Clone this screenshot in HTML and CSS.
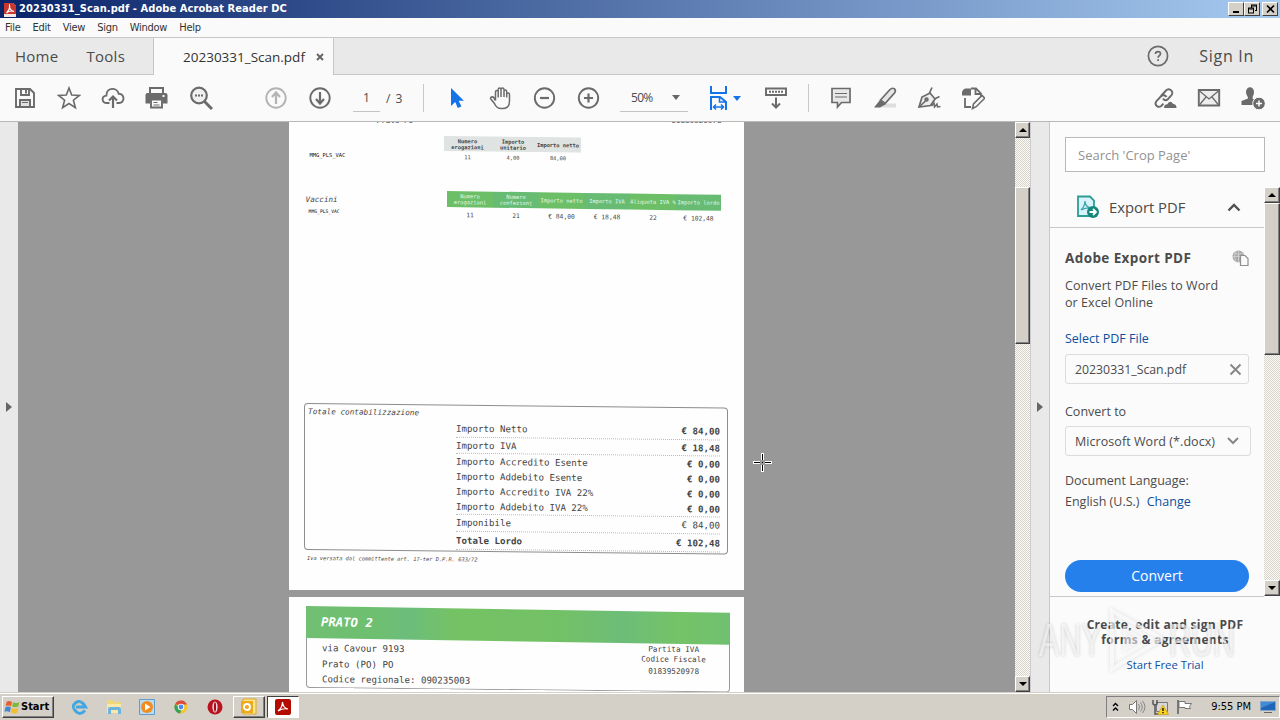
FILE: index.html
```html
<!DOCTYPE html>
<html lang="en">
<head>
  <meta charset="utf-8">
  <title>20230331_Scan.pdf - Adobe Acrobat Reader DC</title>
  <link rel="stylesheet" href="styles.css">
</head>
<body>
  <div class="titlebar">
    <svg class="app-icon" width="12" height="15" viewBox="0 0 12 15"><path d="M0 1h9l3 3v11H0z" fill="#f4e6e4"/><path d="M0 1h9l3 3v8H0z" fill="#c8362e"/><path d="M2.500 11C5 8 6 5 5.500 3.500C5 6 7 9 10 9.500C7 8.500 4 9.500 2.500 11z" fill="none" stroke="#fff" stroke-width="1.200"/></svg>
    <span class="title">20230331_Scan.pdf - Adobe Acrobat Reader DC</span>
    <div class="win-buttons">
      <button class="win-btn"><svg width="11" height="10"><path d="M2 8h6" stroke="#000" stroke-width="2"/></svg></button>
      <button class="win-btn"><svg width="11" height="10"><path d="M4 1h6M4 2h6M4.500 1v3M9.500 1v5.500M8 6.500h2M1 4h6M1 5h6M1.500 4v5M6.500 4v5M1 9h6" stroke="#000" fill="none"/></svg></button>
      <button class="win-btn close"><svg width="11" height="10"><path d="M2 1.500l7 7M9 1.500l-7 7" stroke="#000" stroke-width="1.600"/></svg></button>
    </div>
  </div>
  <div class="menubar">
    <span>File</span><span>Edit</span><span>View</span><span>Sign</span><span>Window</span><span>Help</span>
  </div>

  <div class="tabs">
    <div class="tab-group">
      <span class="tab-home">Home</span>
      <span class="tab-tools">Tools</span>
    </div>
    <div class="tab-active">
      <span>20230331_Scan.pdf</span>
      <svg width="8" height="8" viewBox="0 0 8 8"><path d="M1 1l6 6M7 1l-6 6" stroke="#666" stroke-width="2"/></svg>
    </div>
    <div class="tab-rest">
      <svg width="22" height="22" viewBox="0 0 22 22"><circle cx="11" cy="11" r="9.600" fill="none" stroke="#6b6b6b" stroke-width="1.700"/><path d="M8.500 9c0-3.200 5-3 5-.2c0 1.800-2.400 1.900-2.400 4" fill="none" stroke="#6b6b6b" stroke-width="1.700"/><path d="M10.200 14.200h1.800v1.800h-1.800z" fill="#6b6b6b"/></svg>
      <span>Sign In</span>
    </div>
  </div>

  <div class="toolbar">
    <div class="tools tools-file">
      <svg class="icon" viewBox="0 0 24 24"><path d="M3 3h14l4 4v14H3z"/><path d="M8 3v6h8V3M13 4v3.500M7 21v-7h10v7"/><path d="M7 14h10v7H7z" fill="#e0e0e0"/><path d="M9 16.500h6" stroke-width="1"/></svg>
      <svg class="icon" viewBox="0 0 24 24"><path d="M12 2l2.700 7.100 7.600.4-5.900 4.700 2 7.500L12 17.500l-6.400 4.200 2-7.500L1.700 9.500l7.600-.4z" stroke-width="1.600"/></svg>
      <svg class="icon" viewBox="0 0 24 24"><path d="M8.500 17H6c-5.500 0-6-7-.6-7.400C5.500 1 16 1 17.700 7.800C24 7.500 24 17 18 17h-2.500"/><path d="M12 22V11M8 14.500l4-4 4 4" stroke-width="2.200"/></svg>
      <svg class="icon" viewBox="0 0 24 24"><path d="M4 1h15v6H4zM.5 9q0-2 2-2h18q2 0 2 2v8.500H18v-4H5v4H.5z" fill="#6b6b6b" stroke="none"/><path d="M6 3h11v4H6z" fill="#fafafa" stroke="none"/><path d="M6 13.500h11v8H6z" fill="#fafafa"/><path d="M8.500 16.500h4M8.500 19h6" stroke-width="1"/><path d="M17.500 10h2" stroke="#fff"/></svg>
      <svg class="icon" viewBox="0 0 24 24"><circle cx="10" cy="9.500" r="7.800" fill="#f0f0f0" stroke-width="2.200"/><path d="M15.500 15.500L23 23" stroke-width="3"/><path d="M6 9.500h2M9 9.500h2M12 9.500h2" stroke-width="1.800"/></svg>
    </div>
    <div class="tools tools-page">
      <svg class="icon light" viewBox="0 0 24 24"><circle cx="12" cy="12" r="9.700"/><path d="M12 18V7M8 11l4-4.500 4 4.500" stroke-width="2.200"/></svg>
      <svg class="icon" viewBox="0 0 24 24"><circle cx="12" cy="12" r="9.700"/><path d="M12 6v11M8 13l4 4.500 4-4.500" stroke-width="2.200"/></svg>
    </div>
    <span class="page-input">1</span>
    <span class="page-count">/ 3</span>
    <div class="tools tools-view">
      <svg class="icon" viewBox="0 0 24 24"><path d="M6 2v18l4.200-4 2.600 6 3.600-1.600-2.700-5.700h5.200z" fill="#1473e6" stroke="none"/></svg>
      <svg class="icon" viewBox="0 0 24 24"><path d="M6.500 14.500V6q0-1.500 1.300-1.500T9.200 6v5.500M9.200 6V3.500q0-1.500 1.400-1.500T12 3.500V11M12 3.500Q12 2 13.500 2T15 3.500V11M15 5.500Q15 4 16.300 4t1.400 1.500v6M17.700 8.500q0-1.500 1.400-1.500t1.400 1.500V15q0 7.500-6.500 7.500h-2q-4.500 0-6.500-5L1.800 13q-.8-1.500.7-2t2.500 1l1.500 2.500" stroke-width="1.500"/></svg>
      <svg class="icon" viewBox="0 0 24 24"><circle cx="11.500" cy="12" r="9.700"/><path d="M7 12h9" stroke-width="2.200"/></svg>
      <svg class="icon" viewBox="0 0 24 24"><circle cx="11.500" cy="12" r="9.700"/><path d="M7 12h9M11.500 7.500v9" stroke-width="2.200"/></svg>
    </div>
    <div class="zoom-select"><span>50%</span><i class="caret"></i></div>
    <div class="fit">
      <svg class="icon" viewBox="0 0 24 24"><g stroke="#1473e6"><path d="M4 0v7h15V0" stroke-width="2"/><path d="M4 24V11h9l6 5v8" stroke-width="2"/><path d="M12.500 11v5H19M7 21h9M9 18.500L6.500 21 9 23.500M14 18.500l2.500 2.500-2.500 2.500" stroke-width="1.500"/></g></svg>
      <i class="caret blue"></i>
    </div>
    <svg class="icon" viewBox="0 0 24 24"><path d="M2 2.500h20v6.500H2z" fill="#fff"/><path d="M5 5.800h14" stroke-dasharray="2 1"/><path d="M12 11.500v9.500M8 17.500l4 4 4-4" stroke-width="2"/></svg>
    <div class="tools tools-edit">
      <svg class="icon" viewBox="0 0 24 24"><path d="M3 2.500h18v14h-8.500L8.500 21v-4.500H3z" fill="#e8e8e8" stroke-width="1.700"/><path d="M6 7.500h12M6 11h12" stroke-width="1.200"/></svg>
      <svg class="icon" viewBox="0 0 24 24"><path d="M9 17.500h14v4H6z" fill="#ddd" stroke="none"/><path d="M7.500 14L17 3.500q2-2 4.200-.8t.3 4.300L12 17.500z" fill="#e5e5e5" stroke-width="1.700"/><path d="M7 14l5.500 4.500-3 1.500-2.500 1.500H1z" fill="#6b6b6b" stroke="none"/></svg>
      <svg class="icon" viewBox="0 0 24 24"><path d="M2 21L5 11l8-4 5 6-4.500 6.500z" fill="#eee" stroke-width="1.700"/><path d="M2 21l6.500-6M12.500 7L15 1.500M17.500 13l5-2.500" stroke-width="1.700"/><circle cx="9.500" cy="13.500" r="1.300"/><path d="M14.500 20l2.500-3 .5 4 2.500-3 .5 3 3-.5" stroke-width="1.500"/></svg>
      <svg class="icon" viewBox="0 0 24 24"><path d="M10 2.500h5l5 5V10M14.500 3v5H20M4 12v9h6" stroke-width="1.800"/><path d="M1 6l1-2 2-1.500h6v7H1z" fill="#6b6b6b" stroke="none"/><path d="M11.500 22.500l1-4.500L21 9.500l2.700 2.700-8.500 8.500z" stroke-width="1.600" fill="#fafafa"/></svg>
    </div>
    <div class="tools tools-share">
      <svg class="icon" viewBox="0 0 24 24"><path d="M8 10l5-5.500c3-3 8.500 1 5.500 4.700L15 13c-2 2-4 1.500-5-.5M13.500 11c-1-2-3.500-2.500-5.500-.7L3.500 15c-3 4 2 7.500 5 4.700l2-2"/><path d="M11 22q0-3.500 3.300-3.800q3-4.700 5.700-.5q3.500.3 3.500 4.300z" fill="#6b6b6b" stroke="none"/></svg>
      <svg class="icon" viewBox="0 0 24 24"><path d="M1.800 4h20.400v15.500H1.800z" fill="#eee"/><path d="M2 4.500l10 8.500 10-8.500M2 19.500l7-8.500M22 19.500L15 11" stroke-width="1.300"/></svg>
      <svg class="icon" viewBox="0 0 24 24"><path d="M5 6c0-6.500 8-6.500 8 0c0 3-1.500 4-1.500 6.500L14 14v5H.5v-4L7 12.500C7 10 5 9 5 6z" fill="#6b6b6b" stroke="none"/><circle cx="18" cy="17.500" r="6.300" fill="#6b6b6b" stroke="#fafafa" stroke-width="1"/><path d="M15 17.500h6M18 14.500v6" stroke="#fff" stroke-width="1.500"/></svg>
    </div>
  </div>

  <div class="main">
    <div class="strip left"><i class="arrow"></i></div>
    <div class="canvas">
      <div class="page page-one">
        <div class="cut-line"><span>Prato  PO</span><span>01839520978</span></div>
        <div class="scan-row first">
          <span class="code">MMG_PLS_VAC</span>
          <div class="grid grey">
            <b>Numero<br>erogazioni</b><b>Importo<br>unitario</b><b>Importo netto</b>
            <span>11</span><span>4,00</span><span>84,00</span>
          </div>
        </div>
        <div class="scan-row second">
          <div class="label"><em>Vaccini</em><span class="code">MMG_PLS_VAC</span></div>
          <div class="grid green">
            <b>Numero<br>erogazioni</b><b>Numero<br>confezioni</b><b>Importo netto</b><b>Importo IVA</b><b>Aliquota IVA %</b><b>Importo lordo</b>
            <span>11</span><span>21</span><span>€ 84,00</span><span>€ 18,48</span><span>22</span><span>€ 102,48</span>
          </div>
        </div>
        <div class="total-box">
          <em>Totale contabilizzazione</em>
          <div class="totals">
            <div class="line tall dotted"><span>Importo Netto</span><b>€ 84,00</b></div>
            <div class="line mid dotted"><span>Importo IVA</span><b>€ 18,48</b></div>
            <div class="line"><span>Importo Accredito Esente</span><b>€ 0,00</b></div>
            <div class="line"><span>Importo Addebito Esente</span><b>€ 0,00</b></div>
            <div class="line"><span>Importo Accredito IVA 22%</span><b>€ 0,00</b></div>
            <div class="line dotted"><span>Importo Addebito IVA 22%</span><b>€ 0,00</b></div>
            <div class="line low dotted"><span>Imponibile</span><span>€ 84,00</span></div>
            <div class="line tall dotted"><b>Totale Lordo</b><b>€ 102,48</b></div>
          </div>
        </div>
        <p class="note">Iva versata dal committente art. 17-ter D.P.R. 633/72</p>
      </div>
      <div class="page page-two">
        <div class="banner">PRATO 2</div>
        <div class="address">
          <div class="address-left">via Cavour 9193<br>Prato (PO) PO<br>Codice regionale: 090235003</div>
          <div class="address-right">Partita IVA<br>Codice Fiscale<span>01839520978</span></div>
        </div>
      </div>
      <svg class="cursor" width="19" height="19" viewBox="0 0 19 19"><path d="M0 9.500h7M12 9.500h7M9.500 0v7M9.500 12v7" stroke="#fff" stroke-width="3"/><path d="M1 9.500h6M12 9.500h6M9.500 1v6M9.500 12v6M9 9.500h1" stroke="#000"/></svg>
    </div>
    <div class="scrollbar doc-scroll">
      <i class="sb-btn up"></i>
      <i class="sb-thumb"></i>
      <i class="sb-btn down"></i>
    </div>
    <div class="strip right"><i class="arrow"></i></div>

    <div class="panel">
      <div class="search">Search 'Crop Page'</div>
      <div class="panel-body">
        <div class="panel-content">
          <div class="export-head">
            <svg width="24" height="24" viewBox="0 0 24 24"><path d="M2 1.500h12l4 4V21H2z" fill="#d8f3fb" stroke="#2d9d92" stroke-width="1.800"/><path d="M5 15q4-4 4-9q0 6 6 7q-5-.5-10 2z" fill="none" stroke="#3ba8a8" stroke-width="1.300"/><circle cx="17" cy="17" r="6" fill="#16877c"/><path d="M13.500 17h6M17 14l3 3-3 3" fill="none" stroke="#fff" stroke-width="1.800"/></svg>
            <span>Export PDF</span>
            <svg width="14" height="9" viewBox="0 0 14 9"><path d="M1.500 7.500L7 2l5.500 5.500" fill="none" stroke="#505050" stroke-width="2.400"/></svg>
          </div>
          <div class="export-title">
            <b>Adobe Export PDF</b>
            <svg width="17" height="16" viewBox="0 0 17 16"><circle cx="6.500" cy="6.500" r="6" fill="#aaa"/><path d="M6.500 0v13M0 6.500h13M2 3q4.500 3 9 0M4 1q-3 5 0 11" stroke="#ddd" stroke-width=".6" fill="none"/><path d="M8.500 5.500h4.500l3 3v7H8.500z" fill="#fafafa" stroke="#909090" stroke-width="1.200"/></svg>
          </div>
          <p class="desc">Convert PDF Files to Word<br>or Excel Online</p>
          <a class="link select-file">Select PDF File</a>
          <div class="field file-field"><span>20230331_Scan.pdf</span><svg width="13" height="13" viewBox="0 0 13 13"><path d="M1.500 1.500l10 10M11.500 1.500l-10 10" stroke="#888" stroke-width="2"/></svg></div>
          <div class="convert-label">Convert to</div>
          <div class="field format-field"><span>Microsoft Word (*.docx)</span><svg width="12" height="8" viewBox="0 0 12 8"><path d="M1 1l5 5 5-5" fill="none" stroke="#888" stroke-width="2"/></svg></div>
          <div class="lang">Document Language:<br>English (U.S.) <a class="link">Change</a></div>
          <button class="convert">Convert</button>
        </div>
        <div class="scrollbar panel-scroll">
          <i class="sb-btn up"></i>
          <i class="sb-thumb"></i>
          <i class="sb-btn down"></i>
        </div>
      </div>
      <div class="promo">
        <b>Create, edit and sign PDF<br>forms &amp; agreements</b>
        <a class="link">Start Free Trial</a>
      </div>
    </div>
  </div>

  <div class="taskbar">
    <div class="start">
      <svg width="17" height="16" viewBox="0 0 15 15"><path d="M2 2.500q3-1.500 5 .5L6 7Q4 5.500 1 6.500z" fill="#e8602c"/><path d="M8 3q3 1.500 6 0l-1 4q-3 1.500-6 0z" fill="#7db93f"/><path d="M1 7.500q3-1 5 .5l-1 4.500q-2.500-1.500-5-.5z" fill="#4487d0"/><path d="M7 8.500q3 1.500 6 0l-1 4.500q-3 1.500-6-.5z" fill="#f4bd31"/></svg>
      <b>Start</b>
    </div>
    <div class="quick">
      <svg width="18" height="18" viewBox="0 0 18 18"><path d="M14 12.500Q9 18 4.500 13T5 4.500t9.500 4.500H5" fill="none" stroke="#41a7e4" stroke-width="3"/><path d="M1 16Q0 12 7 6T17 2Q13 1 7 5.500T1 16z" fill="#efc347"/></svg>
      <svg width="18" height="18" viewBox="0 0 18 18"><path d="M2 2h6l1 2h7v10H2z" fill="#f0d878"/><path d="M2 6h14v9H2z" fill="#f8e9a8"/><path d="M3 16v-5q0-2 2-2h9q2 0 2 2v5h-3v-4H6v4z" fill="#6cb4de"/></svg>
      <svg width="18" height="18" viewBox="0 0 18 18"><path d="M1.500 1.500h15v15h-15z" fill="#b9daf1" stroke="#609dcc"/><circle cx="9" cy="9" r="6" fill="#f28c1c"/><path d="M7 5.500v7l5.500-3.500z" fill="#fff"/></svg>
      <svg width="18" height="18" viewBox="0 0 18 18"><circle cx="9" cy="9" r="6.500" fill="#f4c52d"/><path d="M9 9L3.300 5.700A6.500 6.500 0 0 1 15 6.500H9z" fill="#dc4a3d"/><path d="M3.300 5.700L9 12.500l-.8 3A6.500 6.500 0 0 1 3.300 5.700z" fill="#36a159"/><circle cx="9" cy="9" r="3.200" fill="#fff"/><circle cx="9" cy="9" r="2.400" fill="#4c8bf0"/></svg>
      <svg width="18" height="18" viewBox="0 0 18 18"><circle cx="9" cy="9" r="7.500" fill="#b91320"/><ellipse cx="9" cy="9" rx="2.600" ry="5.500" fill="#f6dedf"/><ellipse cx="9" cy="9" rx="1.100" ry="4.700" fill="#a30e1a"/></svg>
    </div>
    <div class="task"><svg width="18" height="18" viewBox="0 0 18 18"><path d="M3 1h13v15H3z" fill="#fce58c" stroke="#e2a81c"/><path d="M1 3h12v12H1z" fill="#edaa1d"/><circle cx="7" cy="9" r="3" fill="none" stroke="#fff" stroke-width="1.900"/></svg></div>
    <div class="task active"><svg width="16" height="16" viewBox="0 0 16 16"><rect width="16" height="16" rx="2" fill="#b30b00"/><path d="M3 12Q7.500 8.500 7.500 3Q8 9 13 10Q8 9 3 12z" fill="none" stroke="#fff" stroke-width="1.200"/></svg></div>
    <div class="tray">
      <svg width="7" height="10" viewBox="0 0 7 10"><path d="M1 4l2.500-2.500L6 4M1 8.500L3.500 6 6 8.500" fill="none" stroke="#000" stroke-width="1.400"/></svg>
      <svg class="speaker" width="18" height="16" viewBox="0 0 18 16"><path d="M1.500 5.500h3l4-4v13l-4-4h-3z" fill="#fff" stroke="#777"/><path d="M10.500 5q2 3 0 6M12.500 3.500q3.500 4.500 0 9M14.500 2q5 6 0 12" fill="none" stroke="#888"/></svg>
      <svg class="net" width="17" height="16" viewBox="0 0 17 16"><path d="M4.500 3.500h11v9h-11z" fill="#d8d8d8" stroke="#777"/><path d="M1 1v4q2 2 4 0V1M3 6v9h4" fill="none" stroke="#555" stroke-width="1.500"/><path d="M11 6l5.500 9.500h-11z" fill="#fbd21e" stroke="#c99b0b" stroke-width=".7"/><path d="M11 9v3M11 13v1.300" stroke="#000" stroke-width="1.300"/></svg>
      <svg class="flag" width="17" height="16" viewBox="0 0 17 16"><path d="M2 1v14" stroke="#777" stroke-width="2"/><path d="M3 2.500h6v2h6.500l-2 3 1 2H9V8.500H3z" fill="#fff" stroke="#777"/></svg>
      <span class="clock">9:55 PM</span>
      <svg class="screen" width="16" height="14" viewBox="0 0 16 14"><path d="M.5 1.500h15v9H.5z" fill="#2165b7" stroke="#83a5cb"/><path d="M1 2h14L1 8z" fill="#418ad8"/><path d="M4 12.500h8" stroke="#666"/></svg>
    </div>
  </div>

  <!-- watermark over the lower right corner -->
  <div class="watermark">
    <span>ANY</span>
    <svg width="66" height="66" viewBox="0 0 66 66"><path d="M9 4v58l50-30z" fill="none" stroke="#fff" stroke-opacity=".65" stroke-width="4"/><path d="M20 19v26l22-13z" fill="#fff" fill-opacity=".55"/></svg>
    <span>RUN</span>
  </div>
</body>
</html>
```
FILE: styles.css
```css
* {
  box-sizing: border-box;
}
body {
  margin: 0;
  width: 1280px;
  height: 720px;
  overflow: hidden;
  display: flex;
  flex-direction: column;
  font-family: "Open Sans", "Noto Sans", sans-serif;
  color: #4b4b4b;
  background: #fafafa;
}
svg {
  flex-shrink: 0;
}
button {
  font-family: inherit;
  padding: 0;
}

/* window chrome */
.titlebar {
  height: 18px;
  flex-shrink: 0;
  display: flex;
  align-items: center;
  padding: 0 2px 0 4px;
  background: linear-gradient(to right, #0a246a, #a6caf0);
  color: #fff;
}
.title {
  flex: 1;
  padding-left: 3px;
  font: bold 11px/18px "DejaVu Sans Condensed", "DejaVu Sans", sans-serif;
  font-stretch: condensed;
  letter-spacing: 0.08px;
}
.win-buttons {
  display: flex;
}
.win-btn {
  width: 16px;
  height: 14px;
  display: flex;
  align-items: center;
  justify-content: center;
  background: #d4d0c8;
  border: 1px solid;
  border-color: #fff #404040 #404040 #fff;
}
.win-btn.close {
  margin-left: 2px;
}
.menubar {
  height: 20px;
  flex-shrink: 0;
  display: flex;
  gap: 12px;
  padding-left: 5px;
  font: 11px/20px "DejaVu Sans Condensed", "DejaVu Sans", sans-serif;
  font-stretch: condensed;
  letter-spacing: -0.25px;
  color: #333;
  border-bottom: 1px solid #c8c8c8;
}
.tabs {
  height: 37px;
  flex-shrink: 0;
  display: flex;
  font-size: 15px;
  line-height: 36px;
}
.tab-group,
.tab-rest {
  background: #e9e9e9;
  border-bottom: 1px solid #c6c6c6;
}
.tab-group {
  width: 154px;
  padding-left: 15px;
  border-right: 1px solid #c6c6c6;
  letter-spacing: 0.25px;
}
.tab-tools {
  margin-left: 24px;
}
.tab-active {
  width: 179px;
  display: flex;
  align-items: center;
  justify-content: space-between;
  padding: 0 9px 0 29px;
  font-size: 13.5px;
  color: #333;
}
.tab-rest {
  flex: 1;
  display: flex;
  align-items: center;
  justify-content: flex-end;
  gap: 30px;
  padding-right: 26px;
  border-left: 1px solid #c6c6c6;
  font-size: 16px;
  letter-spacing: 0.7px;
}

/* toolbar */
.toolbar {
  height: 47px;
  flex-shrink: 0;
  display: flex;
  align-items: center;
  border-bottom: 1px solid #b8b8b8;
  font-size: 12px;
}
.icon {
  width: 24px;
  height: 24px;
  fill: none;
  stroke: #6b6b6b;
  stroke-width: 1.9;
}
.icon.light {
  stroke: #b3b3b3;
}
.tools {
  display: flex;
  gap: 20px;
}
.tools-file {
  padding-left: 13px;
}
.tools-page {
  padding: 0 21px 0 51px;
}
.page-input {
  width: 27px;
  line-height: 27px;
  text-align: center;
  border-bottom: 1px solid #c4c4c4;
}
.page-count {
  width: 43px;
  padding-left: 6px;
  letter-spacing: 1px;
}
.tools-view {
  height: 28px;
  align-items: center;
  padding-left: 21px;
  border-left: 1px solid #c8c8c8;
}
.zoom-select {
  width: 68px;
  height: 28px;
  margin-left: 19px;
  padding: 0 8px 0 11px;
  display: flex;
  align-items: center;
  justify-content: space-between;
  border-bottom: 1px solid #c4c4c4;
  letter-spacing: -0.7px;
}
.caret {
  border: 4px solid transparent;
  border-top: 5px solid #666;
  border-bottom: 0;
}
.caret.blue {
  border-top-color: #1473e6;
}
.fit {
  display: flex;
  align-items: center;
  gap: 2px;
  margin: 0 23px 0 19px;
}
.tools-edit {
  height: 28px;
  align-items: center;
  margin-left: 20px;
  padding-left: 20px;
  border-left: 1px solid #c8c8c8;
}
.tools-share {
  margin-left: auto;
  padding-right: 15px;
}

/* document area */
.main {
  flex: 1;
  min-height: 0;
  display: flex;
  overflow: hidden;
}
.strip {
  width: 19px;
  display: flex;
  align-items: center;
  justify-content: center;
  background: #e9e9e9;
}
.strip.left {
  width: 18px;
}
.strip.right {
  border-left: 1px solid #ccc;
}
.arrow {
  border: 5px solid transparent;
  border-left: 6px solid #666;
  border-right: 0;
}
.canvas {
  position: relative;
  width: 997px;
  overflow: hidden;
  background: #989898;
}
.page {
  width: 455px;
  margin-left: 270.6px;
  background: #fefefe;
  font-family: "DejaVu Sans Mono", monospace;
  font-size: 9.15px;
  color: #444;
  overflow: hidden;
}
.page-one {
  height: 467.5px;
  margin-bottom: 7px;
}
.page-two {
  height: 110px;
  padding: 9.5px 14px 0 17px;
}
.cut-line {
  height: 3px;
  padding: 0 22px 0 88px;
  display: flex;
  justify-content: space-between;
  align-items: flex-end;
  font-size: 7.6px;
  line-height: 8px;
  overflow: hidden;
}
.scan-row {
  display: flex;
  justify-content: space-between;
}
.code {
  font-size: 5.4px;
  color: #111;
}
.grid {
  display: grid;
  text-align: center;
  align-items: center;
  font-size: 5.4px;
  transform: skewY(0.6deg);
  transform-origin: left top;
}
.grid b {
  display: flex;
  align-items: center;
  justify-content: center;
  height: 100%;
  line-height: 6px;
}
.first {
  height: 55px;
  padding: 11px 163px 0 21px;
}
.first .code {
  padding-top: 16px;
}
.grid.grey {
  grid-template-columns: 47px 44px 46px;
  grid-template-rows: 15px 11px;
}
.grey b {
  background: #dfe3e2;
}
.second {
  height: 223px;
  padding: 11px 23px 0 17px;
}
.label em {
  display: block;
  padding-top: 1px;
  font-size: 7.6px;
  line-height: 16px;
}
.label .code {
  display: block;
  padding-left: 3px;
  font-size: 4.7px;
  line-height: 8px;
}
.grid.green {
  grid-template-columns: 46px 46px 45px 46px 46px 45px;
  grid-template-rows: 16px 14px;
  font-size: 6.3px;
  transform: skewY(0.8deg);
}
.green b {
  background: #6cbf66;
  color: #e9f8e6;
  font-size: 5.4px;
  font-weight: normal;
  white-space: nowrap;
}
.green b:nth-child(even) {
  background: #68bb73;
}
.total-box {
  width: 424px;
  height: 147px;
  margin-left: 15px;
  padding: 2.5px 7px 0 3px;
  border: 1px solid #8d8d8d;
  border-radius: 4px;
  transform: skewY(0.62deg);
  transform-origin: left top;
}
.total-box > em {
  display: block;
  font-size: 7.7px;
  line-height: 10px;
  height: 10px;
}
.totals {
  margin-left: 148px;
  padding-top: 1.5px;
}
.line {
  display: flex;
  justify-content: space-between;
  align-items: center;
  height: 15.2px;
  white-space: pre;
}
.line.tall {
  height: 18px;
}
.line.mid {
  height: 16.4px;
}
.line.low {
  height: 17px;
}
.line.dotted {
  border-bottom: 1px dotted #bbb;
}
.note {
  margin: 3.5px 0 0 18px;
  font-size: 5.35px;
  line-height: 8px;
  font-style: italic;
  transform: skewY(0.5deg);
  transform-origin: left top;
}
.banner {
  height: 32px;
  padding-left: 15px;
  background: linear-gradient(90deg, #70bf72, #6fbf70 16%, #6cbd7c 24%, #75c264 35%, #73c166 60%, #6dbd79 75%, #74c367 88%, #6fc070);
  color: #fff;
  font-size: 12.3px;
  line-height: 33px;
  font-style: italic;
  font-weight: bold;
  transform: skewY(0.9deg);
  transform-origin: left top;
}
.address {
  height: 50px;
  display: flex;
  justify-content: space-between;
  padding: 3px 23px 0 15px;
  border: 1px solid #999;
  border-top: 0;
  border-radius: 0 0 4px 4px;
  line-height: 15.6px;
  transform: skewY(0.6deg);
  transform-origin: left top;
}
.address-right {
  font-size: 7.7px;
  line-height: 10px;
  text-align: center;
}
.address-right span {
  display: block;
  padding-top: 2px;
}
.cursor {
  position: absolute;
  left: 735px;
  top: 331px;
}

/* classic scrollbars */
.scrollbar {
  width: 15px;
  display: flex;
  flex-direction: column;
  background: repeating-conic-gradient(#d8d4cc 0 25%, #fbfbf6 0 50%) 0 0 / 2px 2px;
}
.sb-btn,
.sb-thumb {
  background: #d4d0c8;
  border: 1px solid;
  border-color: #fff #404040 #404040 #fff;
  box-shadow: inset -1px -1px #808080;
}
.sb-btn {
  height: 16px;
  display: flex;
  align-items: center;
  justify-content: center;
}
.sb-btn::after {
  content: "";
  border: 4px solid transparent;
}
.sb-btn.up::after {
  border-top: 0;
  border-bottom-color: #000;
}
.sb-btn.down::after {
  border-bottom: 0;
  border-top-color: #000;
}
.sb-btn.down {
  margin-top: auto;
}
.doc-scroll .sb-thumb {
  height: 157px;
  margin-top: 49px;
}

/* tools panel */
.panel {
  width: 231px;
  display: flex;
  flex-direction: column;
  border-left: 1px solid #c8c8c8;
  background: #fbfbfb;
  font-size: 12.5px;
}
.search {
  width: 200px;
  height: 35px;
  margin: 15px 0 15px 15px;
  padding-left: 12px;
  border: 1px solid #b9b9b9;
  background: #fff;
  color: #929292;
  font-size: 13px;
  line-height: 34px;
}
.panel-body {
  height: 410px;
  display: flex;
}
.panel-content {
  width: 214px;
  border-bottom: 1px solid #c8c8c8;
}
.panel-scroll {
  width: 16px;
  height: 409px;
}
.panel-scroll .sb-thumb {
  height: 152px;
}
.export-head {
  height: 41px;
  display: flex;
  align-items: center;
  padding: 0 23px 0 26px;
  border-bottom: 1px solid #c8c8c8;
  font-size: 14.8px;
}
.export-head span {
  flex: 1;
  padding-left: 9px;
}
.export-title {
  height: 20px;
  margin: 20px 15px 0;
  display: flex;
  align-items: center;
  justify-content: space-between;
  font-size: 13.5px;
  letter-spacing: 0.4px;
}
.desc {
  margin: 9px 15px 0;
  line-height: 17px;
  letter-spacing: 0.07px;
}
.link {
  color: #0d4f9e;
}
.select-file {
  display: block;
  margin: 18px 15px 0;
  line-height: 20px;
}
.field {
  display: flex;
  align-items: center;
  justify-content: space-between;
  margin-left: 15px;
  padding: 0 7px 0 9px;
  border: 1px solid #dcdcdc;
  border-radius: 3px;
}
.file-field {
  width: 184px;
  height: 30px;
  margin-top: 5px;
  padding-right: 6px;
  font-size: 12.3px;
}
.convert-label {
  margin: 18px 15px 4px;
  line-height: 20px;
}
.format-field {
  width: 186px;
  height: 30px;
  padding-right: 11px;
  letter-spacing: 0.06px;
}
.lang {
  margin: 14px 15px 0;
  line-height: 21px;
}
.lang .link {
  margin-left: 4px;
}
.convert {
  display: block;
  width: 184px;
  height: 32px;
  margin: 48px 0 0 15px;
  padding-bottom: 1px;
  border: 0;
  border-radius: 16px;
  background: #2680eb;
  color: #fff;
  font-size: 14px;
}
.promo {
  display: flex;
  flex-direction: column;
  align-items: center;
  gap: 10px;
  padding-top: 20px;
  line-height: 15px;
  font-size: 12px;
  text-align: center;
}
.promo b {
  letter-spacing: 0.3px;
}
.promo .link {
  font-size: 11.3px;
}

/* taskbar */
.taskbar {
  height: 28px;
  flex-shrink: 0;
  display: flex;
  align-items: center;
  padding-left: 2px;
  background: #d4d0c8;
  border-top: 1px solid #d4d0c8;
  box-shadow: inset 0 1px #fff;
  font: 11px "DejaVu Sans Condensed", "DejaVu Sans", sans-serif;
  font-stretch: condensed;
  color: #000;
}
.start,
.task {
  height: 22px;
  display: flex;
  align-items: center;
  border: 1px solid;
  border-color: #fff #404040 #404040 #fff;
  box-shadow: inset -1px -1px #808080;
}
.start {
  width: 52px;
  padding-left: 1px;
}
.quick {
  display: flex;
  gap: 15.7px;
  padding: 0 9px 0 17px;
}
.task {
  width: 32px;
  justify-content: center;
  margin-right: 2px;
}
.task.active {
  background: #fff;
  border-color: #404040 #fff #fff #404040;
  box-shadow: none;
}
.tray {
  width: 174px;
  height: 22px;
  margin-left: auto;
  padding-left: 5px;
  display: flex;
  align-items: center;
  border: 1px solid;
  border-color: #808080 #fff #fff #808080;
}
.speaker {
  margin-left: 9px;
}
.net {
  margin-left: 6px;
}
.flag {
  margin-left: 7px;
}
.clock {
  margin: 0 9px 0 auto;
}
.screen {
  margin-right: 3px;
}

.watermark {
  position: absolute;
  left: 1039px;
  top: 607px;
  display: flex;
  align-items: center;
  font: 47px/66px "Liberation Sans", sans-serif;
  color: rgba(255, 255, 255, 0.6);
  text-shadow: 0 0 4px rgba(0, 0, 0, 0.2);
}
.watermark span {
  width: 64px;
  transform: scaleX(0.65);
  transform-origin: left;
}
.watermark svg {
  filter: drop-shadow(0 0 2px rgba(0, 0, 0, 0.18));
}
```
